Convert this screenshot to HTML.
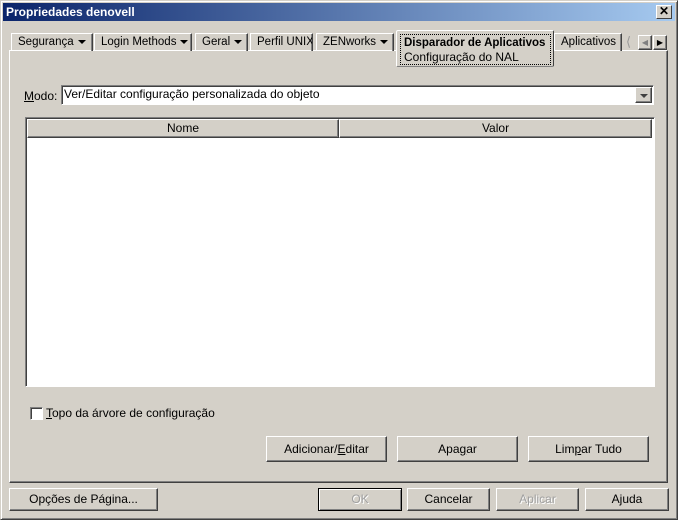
<!DOCTYPE html>
<html><head><meta charset="utf-8"><style>
*{box-sizing:border-box;margin:0;padding:0}
body{width:678px;height:520px;background:#d4d0c8;font-family:"Liberation Sans",Arial,sans-serif;font-size:11px;color:#000;position:relative;overflow:hidden}
.abs{position:absolute}
.win{left:0;top:0;width:678px;height:520px;border:1px solid;border-color:#d4d0c8 #404040 #404040 #d4d0c8;box-shadow:inset 1px 1px 0 #fff,inset -1px -1px 0 #808080}
.title{left:3px;top:3px;width:672px;height:18px;background:linear-gradient(to right,#0a246a,#a6caf0);color:#fff;font-weight:bold;font-size:12px;line-height:18px;padding-left:3px}
.close{left:656px;top:5px;width:16px;height:14px;background:#d4d0c8;border:1px solid;border-color:#fff #404040 #404040 #fff;font-size:12px;line-height:11px;text-align:center;font-weight:bold}
.raised{border:1px solid;border-color:#fff #404040 #404040 #fff;box-shadow:inset -1px -1px 0 #808080}
.sunk{border:1px solid;border-color:#808080 #fff #fff #808080;box-shadow:inset 1px 1px 0 #404040}
.tab{top:33px;height:18px;border:1px solid #fff;border-bottom:none;border-right:1px solid #404040;box-shadow:inset -1px 0 0 #808080;line-height:17px;padding-left:6px;white-space:nowrap;font-size:11.5px;overflow:hidden}
.arr{display:inline-block;width:0;height:0;border-left:4px solid transparent;border-right:4px solid transparent;border-top:4px solid #000;vertical-align:middle;margin-left:4px}
.panel{left:9px;top:50px;width:659px;height:433px;border:1px solid;border-color:#fff #404040 #404040 #fff;box-shadow:inset -1px -1px 0 #808080}
.btn{text-align:center;line-height:21px;border:1px solid;border-color:#fff #404040 #404040 #fff;box-shadow:inset -1px -1px 0 #808080;font-size:12px}
.dis{color:#a0a0a0;text-shadow:1px 1px 0 #fff}
u{text-decoration:underline}
</style></head><body>
<div class="abs win"></div>
<div class="abs title">Propriedades denovell</div>
<div class="abs close">✕</div>

<div class="abs panel"></div>
<div class="abs tab" style="left:11px;width:82px">Segurança<span class="arr"></span></div>
<div class="abs tab" style="left:94px;width:98px">Login Methods<span class="arr"></span></div>
<div class="abs tab" style="left:195px;width:53px">Geral<span class="arr"></span></div>
<div class="abs tab" style="left:250px;width:63px">Perfil UNIX</div>
<div class="abs tab" style="left:316px;width:78px">ZENworks<span class="arr"></span></div>
<div class="abs" style="left:396px;top:30px;width:158px;height:37px;background:#d4d0c8;border:1px solid #fff;border-right:1px solid #404040;border-bottom:1px solid #808080;border-radius:2px"></div>
<div class="abs" style="left:400px;top:34px;width:151px;height:31px;border:1px dotted #000;padding-left:3px;line-height:14px;font-size:12px"><b style="font-size:11.5px">Disparador de Aplicativos</b><br>Configuração do NAL</div>
<div class="abs tab" style="left:554px;width:68px">Aplicativos</div>
<div class="abs" style="left:626px;top:34px;color:#999;font-size:13px">⟨</div>
<div class="abs raised" style="left:638px;top:35px;width:14px;height:15px;font-size:8px;text-align:center;line-height:13px;color:#808080">◀</div>
<div class="abs raised" style="left:653px;top:35px;width:14px;height:15px;font-size:8px;text-align:center;line-height:13px">▶</div>

<div class="abs" style="left:24px;top:89px;font-size:12px"><u>M</u>odo:</div>
<div class="abs sunk" style="left:61px;top:85px;width:593px;height:20px;background:#fff;font-size:12px;line-height:17px;padding-left:2px">Ver/Editar configuração personalizada do objeto</div>
<div class="abs raised" style="left:635px;top:87px;width:17px;height:16px;background:#d4d0c8"><span class="arr" style="margin:4px 0 0 4px;border-top-color:#404040"></span></div>

<div class="abs sunk" style="left:25px;top:117px;width:630px;height:270px;background:#fff"></div>
<div class="abs raised" style="left:27px;top:119px;width:312px;height:19px;background:#d4d0c8;text-align:center;line-height:17px;font-size:12px">Nome</div>
<div class="abs raised" style="left:339px;top:119px;width:313px;height:19px;background:#d4d0c8;text-align:center;line-height:17px;font-size:12px">Valor</div>

<div class="abs sunk" style="left:30px;top:407px;width:13px;height:13px;background:#fff"></div>
<div class="abs" style="left:46px;top:406px;font-size:12px"><u>T</u>opo da árvore de configuração</div>

<div class="abs btn" style="left:266px;top:436px;width:121px;height:26px;line-height:24px">Adicionar/<u>E</u>ditar</div>
<div class="abs btn" style="left:397px;top:436px;width:121px;height:26px;line-height:24px">Apa<u>g</u>ar</div>
<div class="abs btn" style="left:528px;top:436px;width:121px;height:26px;line-height:24px">Lim<u>p</u>ar Tudo</div>

<div class="abs btn" style="left:9px;top:488px;width:149px;height:23px">Opções de Pá<u>g</u>ina...</div>
<div class="abs btn dis" style="left:318px;top:488px;width:84px;height:23px;border-color:#000;box-shadow:inset 1px 1px 0 #fff,inset -1px -1px 0 #808080">OK</div>
<div class="abs btn" style="left:407px;top:488px;width:83px;height:23px">Cancelar</div>
<div class="abs btn dis" style="left:496px;top:488px;width:83px;height:23px">Aplicar</div>
<div class="abs btn" style="left:585px;top:488px;width:84px;height:23px">A<u>j</u>uda</div>
</body></html>
